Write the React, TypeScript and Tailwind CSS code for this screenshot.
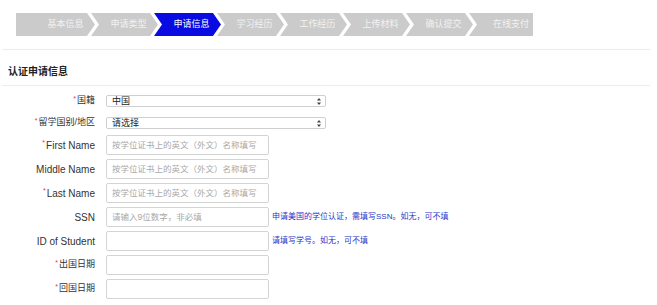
import React from 'react';

const steps = ['基本信息', '申请类型', '申请信息', '学习经历', '工作经历', '上传材料', '确认提交', '在线支付'];

const clipFirst = '[clip-path:polygon(0_0,calc(100%_-_8px)_0,100%_50%,calc(100%_-_8px)_100%,0_100%)]';

interface Row {
  label: string;
  required?: boolean;
  cjk?: boolean;
  placeholder?: string;
  help?: string;
}

const rows: Row[] = [
  { label: 'First Name', required: true, placeholder: '按学位证书上的英文（外文）名称填写' },
  { label: 'Middle Name', placeholder: '按学位证书上的英文（外文）名称填写' },
  { label: 'Last Name', required: true, placeholder: '按学位证书上的英文（外文）名称填写' },
  { label: 'SSN', placeholder: '请输入9位数字，非必填', help: '申请美国的学位认证，需填写SSN。如无，可不填' },
  { label: 'ID of Student', help: '请填写学号。如无，可不填' },
  { label: '出国日期', required: true, cjk: true },
  { label: '回国日期', required: true, cjk: true },
];

const Label: React.FC<{ text: string; required?: boolean; cjk?: boolean }> = ({ text, required, cjk }) => (
  <div className={`w-[95px] shrink-0 text-right text-[#333] ${cjk ? 'text-[9px]' : 'text-[10px]'}`}>
    {required && <span className="text-[#e33] text-[7px] align-top mr-px">*</span>}
    {text}
  </div>
);

const SelectBox: React.FC<{ value: string }> = ({ value }) => (
  <div className="w-[220px] h-[12px] border border-[#cfcfcf] rounded-[2px] bg-white flex items-center justify-between pl-[5px] pr-[4px] text-[9px] text-[#222] leading-none">
    <span>{value}</span>
    <svg width="4" height="7" viewBox="0 0 4 7">
      <path d="M2 0 L4 2.6 L0 2.6 Z" fill="#444" />
      <path d="M2 7 L4 4.4 L0 4.4 Z" fill="#444" />
    </svg>
  </div>
);

export default function App() {
  return (
    <div
      className="w-[657px] h-[305px] bg-white overflow-hidden"
      style={{ fontFamily: '"Liberation Sans", "Noto Sans CJK SC", sans-serif' }}
    >
      {/* step bar */}
      <div className="flex pt-[13px] pl-[16px]">
        {steps.map((s, i) => {
          const active = i === 2;
          const first = i === 0;
          const last = i === steps.length - 1;
          const shape = first
            ? `w-[79px] pl-[20px] ${clipFirst}`
            : last
            ? 'w-[64px] pl-[20px] -ml-[4px] [clip-path:polygon(0_0,100%_0,100%_100%,0_100%,8px_50%)]'
            : 'w-[67px] pl-[8px] -ml-[4px] [clip-path:polygon(0_0,calc(100%_-_8px)_0,100%_50%,calc(100%_-_8px)_100%,0_100%,8px_50%)]';
          return (
            <div
              key={s}
              className={`h-[23px] flex items-center justify-center text-[9px] ${shape} ${
                active ? 'bg-[#0a0ae3] text-white' : 'bg-[#cbcbcb] text-[#f2f2f2]'
              }`}
            >
              {s}
            </div>
          );
        })}
      </div>

      <div className="mt-[13px] mx-[2px] w-[648px] h-px bg-[#ececec]" />

      <div className="mt-[15px] pl-[8px] h-[14px] leading-[14px] text-[10px] font-bold text-[#222]">认证申请信息</div>

      <div className="mt-[6px] mx-[2px] w-[648px] h-px bg-[#ececec]" />

      {/* form */}
      <div className="flex flex-col mt-[9px]">
        <div className="flex items-center gap-[11px] h-[12px]">
          <Label text="国籍" required cjk />
          <SelectBox value="中国" />
        </div>
        <div className="flex items-center gap-[11px] h-[12px] mt-[10px]">
          <Label text="留学国别/地区" required cjk />
          <SelectBox value="请选择" />
        </div>
        <div className="flex flex-col gap-[4px] mt-[6px]">
          {rows.map((r) => (
            <div key={r.label} className="flex items-center gap-[11px] h-[20px]">
              <Label text={r.label} required={r.required} cjk={r.cjk} />
              <div className="w-[163px] h-[20px] border border-[#d4d4d4] rounded-[2px] bg-white flex items-center pl-[5px] text-[8.5px] text-[#a8a8a8]">
                {r.placeholder}
              </div>
              {r.help && <div className="-ml-[8px] text-[8px] text-[#2b35c8]">{r.help}</div>}
            </div>
          ))}
        </div>
      </div>
    </div>
  );
}
